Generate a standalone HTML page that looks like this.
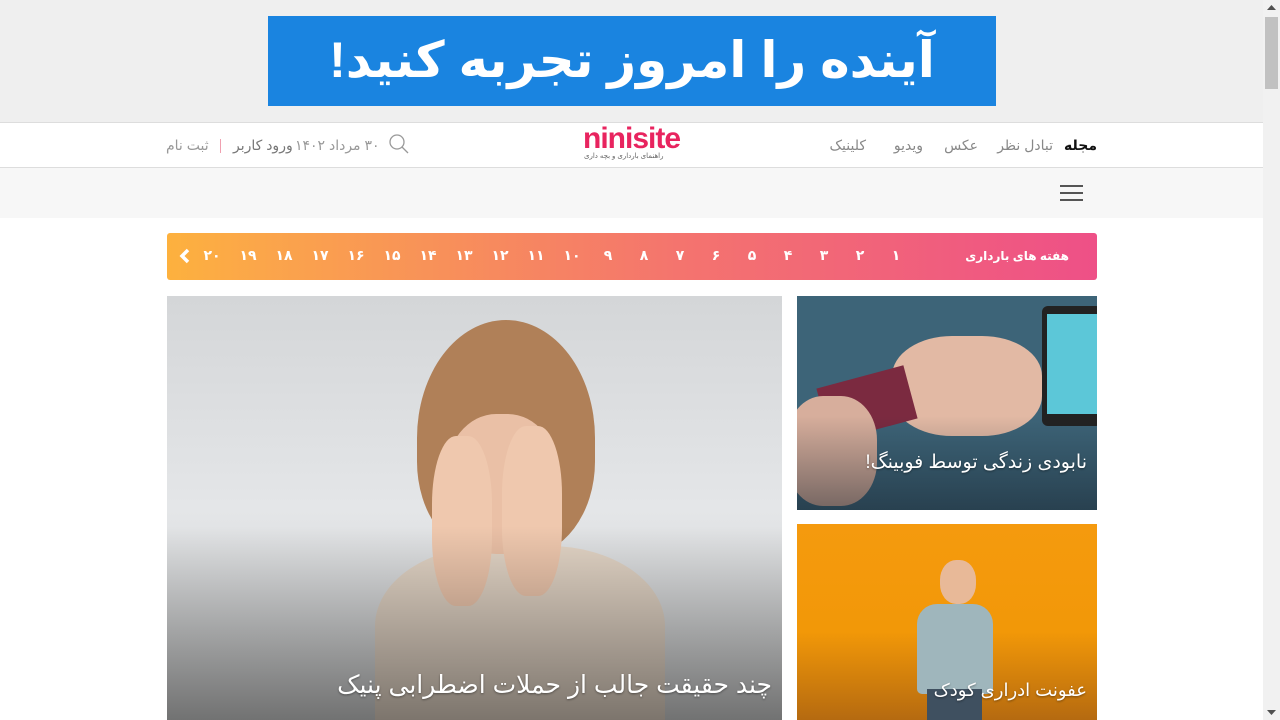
<!DOCTYPE html>
<html lang="fa" dir="rtl"><head><meta charset="utf-8">
<style>
*{margin:0;padding:0;box-sizing:border-box}
body{width:1280px;height:720px;overflow:hidden;background:#fff;font-family:"Liberation Sans","Noto Sans CJK SC","DejaVu Sans",sans-serif;position:relative}
.abs{position:absolute}
#top{left:0;top:0;width:1263px;height:122px;background:#efefef}
#ad{left:268px;top:16px;width:728px;height:90px;background:#1a84e0;color:#fff;font-size:50px;font-weight:bold;text-align:center;line-height:88px;direction:rtl}
#nav{left:0;top:122px;width:1263px;height:46px;background:#fff;border-top:1px solid #ddd;border-bottom:1px solid #ddd}
#menu{left:0;top:168px;width:1263px;height:50px;background:#f7f7f7}
.t{position:absolute;white-space:nowrap;direction:rtl;font-size:14px;color:#888}
#weeks{left:167px;top:233px;width:930px;height:47px;border-radius:3px;background:linear-gradient(to left,#ee5087,#f4746e 45%,#fba64a 90%,#fdb13e)}
.n{position:absolute;top:247px;color:#fff;font-size:14px;font-weight:bold;width:20px;text-align:center;direction:rtl}
.cap{position:absolute;color:#fff;white-space:nowrap;direction:rtl;text-shadow:0 1px 2px rgba(0,0,0,.4)}
#sb{left:1263px;top:0;width:17px;height:720px;background:#f1f1f1}
</style></head><body>
<div class="abs" id="top"></div>
<div class="abs" id="ad">آینده را امروز تجربه کنید!</div>
<div class="abs" id="nav"></div>
<div class="t" style="right:183px;top:137px;color:#111;font-weight:bold">مجله</div>
<div class="t" style="right:227px;top:137px">تبادل نظر</div>
<div class="t" style="right:302px;top:137px">عکس</div>
<div class="t" style="right:357px;top:137px">ویدیو</div>
<div class="t" style="right:414px;top:137px">کلینیک</div>
<div class="abs" style="left:583px;top:122px;font-size:30px;font-weight:bold;color:#e8245f;letter-spacing:-1px">ninisite</div>
<div class="abs" style="left:584px;top:152px;font-size:7px;color:#666;direction:rtl">راهنمای بارداری و بچه داری</div>
<svg class="abs" style="left:388px;top:133px" width="22" height="22" viewBox="0 0 22 22"><circle cx="9" cy="9" r="7" fill="none" stroke="#999" stroke-width="1.3"/><line x1="14" y1="14" x2="20" y2="20" stroke="#999" stroke-width="1.3"/></svg>
<div class="t" style="left:295px;top:137px;color:#999">۳۰ مرداد ۱۴۰۲</div>
<div class="t" style="left:233px;top:137px;color:#777">ورود کاربر</div>
<div class="abs" style="left:220px;top:139px;width:1px;height:14px;background:#f0a0b0"></div>
<div class="t" style="left:166px;top:137px;color:#999">ثبت نام</div>
<div class="abs" id="menu"></div>
<div class="abs" style="left:1060px;top:185px;width:23px;height:2px;background:#555"></div>
<div class="abs" style="left:1060px;top:192px;width:23px;height:2px;background:#555"></div>
<div class="abs" style="left:1060px;top:199px;width:23px;height:2px;background:#555"></div>
<div class="abs" id="weeks"></div>
<div class="t" style="right:211px;top:249px;color:#fff;font-size:12px;font-weight:bold">هفته های بارداری</div>
<div class="n" style="left:886px">۱</div><div class="n" style="left:850px">۲</div><div class="n" style="left:814px">۳</div><div class="n" style="left:778px">۴</div><div class="n" style="left:742px">۵</div><div class="n" style="left:706px">۶</div><div class="n" style="left:670px">۷</div><div class="n" style="left:634px">۸</div><div class="n" style="left:598px">۹</div><div class="n" style="left:562px">۱۰</div><div class="n" style="left:526px">۱۱</div><div class="n" style="left:490px">۱۲</div><div class="n" style="left:454px">۱۳</div><div class="n" style="left:418px">۱۴</div><div class="n" style="left:382px">۱۵</div><div class="n" style="left:346px">۱۶</div><div class="n" style="left:310px">۱۷</div><div class="n" style="left:274px">۱۸</div><div class="n" style="left:238px">۱۹</div><div class="n" style="left:202px">۲۰</div>
<svg class="abs" style="left:178px;top:248px" width="14" height="16" viewBox="0 0 14 16"><path d="M10 2 L4 8 L10 14" fill="none" stroke="#fff" stroke-width="3.5"/></svg>
<!-- big image -->
<div class="abs" style="left:167px;top:296px;width:615px;height:424px;overflow:hidden;background:linear-gradient(#d4d6d8,#e4e6e8 50%,#cfd0d0)">
<div class="abs" style="left:250px;top:24px;width:178px;height:236px;border-radius:50% 50% 40% 40%;background:#b08058"></div>
<div class="abs" style="left:208px;top:250px;width:290px;height:200px;border-radius:40% 40% 0 0;background:#e3d5c6"></div>
<div class="abs" style="left:278px;top:118px;width:114px;height:140px;border-radius:45%;background:#eac0a6"></div>
<div class="abs" style="left:265px;top:140px;width:60px;height:170px;border-radius:40%;background:#efc8ae"></div>
<div class="abs" style="left:335px;top:130px;width:60px;height:170px;border-radius:40%;background:#efc8ae"></div>
<div class="abs" style="left:0;top:230px;width:615px;height:194px;background:linear-gradient(transparent,rgba(0,0,0,.45))"></div>
</div>
<div class="cap" style="right:508px;top:670px;font-size:25px">چند حقیقت جالب از حملات اضطرابی پنیک</div>
<!-- right top -->
<div class="abs" style="left:797px;top:296px;width:300px;height:214px;overflow:hidden;background:#3d6478">
<div class="abs" style="left:245px;top:10px;width:60px;height:120px;background:#222;border-radius:6px"></div>
<div class="abs" style="left:250px;top:18px;width:50px;height:100px;background:#5cc7d8"></div>
<div class="abs" style="left:95px;top:40px;width:150px;height:100px;border-radius:40%;background:#e2b9a4"></div>
<div class="abs" style="left:25px;top:80px;width:90px;height:55px;background:#7b2a40;transform:rotate(-15deg)"></div>
<div class="abs" style="left:-10px;top:100px;width:90px;height:110px;border-radius:40%;background:#d7ae9c"></div>
<div class="abs" style="left:0;top:120px;width:300px;height:94px;background:linear-gradient(transparent,rgba(20,30,40,.5))"></div>
</div>
<div class="cap" style="right:193px;top:451px;font-size:19px">نابودی زندگی توسط فوبینگ!</div>
<!-- right bottom -->
<div class="abs" style="left:797px;top:524px;width:300px;height:196px;overflow:hidden;background:linear-gradient(#f59a0e,#f29808 55%,#b56a10)">
<div class="abs" style="left:143px;top:36px;width:36px;height:44px;border-radius:45%;background:#e8b998"></div>
<div class="abs" style="left:120px;top:80px;width:76px;height:90px;border-radius:20px 20px 5px 5px;background:#9fb6bc"></div>
<div class="abs" style="left:130px;top:165px;width:55px;height:40px;background:#3f5060"></div>
</div>
<div class="cap" style="right:193px;top:680px;font-size:18px">عفونت ادراری کودک</div>
<div class="abs" id="sb"></div>
<div class="abs" style="left:1265px;top:17px;width:13px;height:72px;background:#c1c1c1"></div>
<svg class="abs" style="left:1266px;top:4px" width="11" height="8"><path d="M1 6 L5.5 1 L10 6Z" fill="#505050"/></svg>
<svg class="abs" style="left:1266px;top:708px" width="11" height="8"><path d="M1 2 L5.5 7 L10 2Z" fill="#505050"/></svg>
</body></html>
